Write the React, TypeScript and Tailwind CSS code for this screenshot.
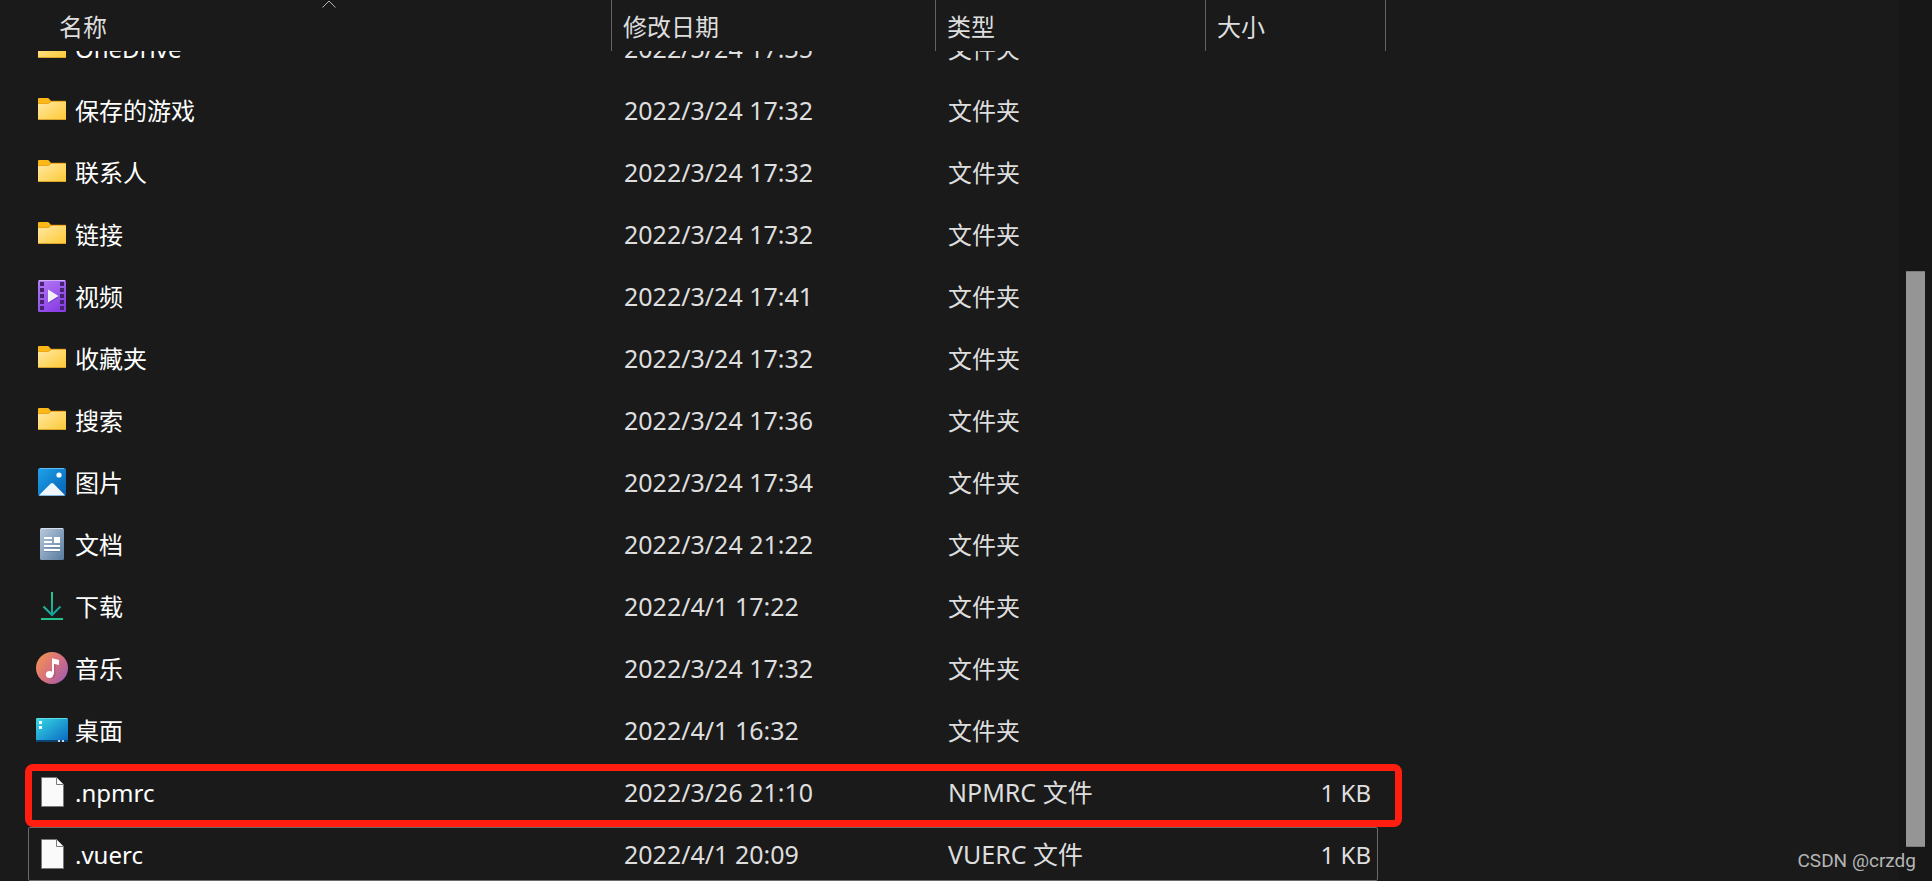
import React from 'react';
import clsx from 'clsx';

type Kind = 'folder' | 'video' | 'picture' | 'document' | 'download' | 'music' | 'desktop' | 'file';

interface Entry {
    name: string;
    kind: Kind;
    date: string;
    type: string;
    size?: string;
    marked?: boolean;
    focused?: boolean;
}

const entries: Entry[] = [
    { name: 'OneDrive', kind: 'folder', date: '2022/3/24 17:35', type: '文件夹' },
    { name: '保存的游戏', kind: 'folder', date: '2022/3/24 17:32', type: '文件夹' },
    { name: '联系人', kind: 'folder', date: '2022/3/24 17:32', type: '文件夹' },
    { name: '链接', kind: 'folder', date: '2022/3/24 17:32', type: '文件夹' },
    { name: '视频', kind: 'video', date: '2022/3/24 17:41', type: '文件夹' },
    { name: '收藏夹', kind: 'folder', date: '2022/3/24 17:32', type: '文件夹' },
    { name: '搜索', kind: 'folder', date: '2022/3/24 17:36', type: '文件夹' },
    { name: '图片', kind: 'picture', date: '2022/3/24 17:34', type: '文件夹' },
    { name: '文档', kind: 'document', date: '2022/3/24 21:22', type: '文件夹' },
    { name: '下载', kind: 'download', date: '2022/4/1 17:22', type: '文件夹' },
    { name: '音乐', kind: 'music', date: '2022/3/24 17:32', type: '文件夹' },
    { name: '桌面', kind: 'desktop', date: '2022/4/1 16:32', type: '文件夹' },
    { name: '.npmrc', kind: 'file', date: '2022/3/26 21:10', type: 'NPMRC 文件', size: '1 KB', marked: true },
    { name: '.vuerc', kind: 'file', date: '2022/4/1 20:09', type: 'VUERC 文件', size: '1 KB', focused: true },
];

// shared gradients, referenced by id from the icons
function Gradients() {
    return (
        <svg className="absolute size-0" aria-hidden="true">
            <defs>
                <linearGradient id="g-folder" x1="0" y1="0" x2="1" y2="1">
                    <stop offset="0" stopColor="#ffe9a6" />
                    <stop offset="1" stopColor="#ffc934" />
                </linearGradient>
                <linearGradient id="g-video" x1="0" y1="0" x2="0.6" y2="1">
                    <stop offset="0" stopColor="#b57bf5" />
                    <stop offset="1" stopColor="#8a3fe6" />
                </linearGradient>
                <linearGradient id="g-picture" x1="0" y1="0" x2="1" y2="1">
                    <stop offset="0" stopColor="#1ea3ea" />
                    <stop offset="1" stopColor="#0560b6" />
                </linearGradient>
                <linearGradient id="g-document" x1="0" y1="0" x2="1" y2="1">
                    <stop offset="0" stopColor="#b9c9de" />
                    <stop offset="1" stopColor="#587b9f" />
                </linearGradient>
                <linearGradient id="g-download" gradientUnits="userSpaceOnUse" x1="5" y1="2" x2="27" y2="30">
                    <stop offset="0" stopColor="#3bd08a" />
                    <stop offset="0.7" stopColor="#12a39b" />
                    <stop offset="1" stopColor="#1fbd9b" />
                </linearGradient>
                <linearGradient id="g-music" x1="0" y1="0.2" x2="1" y2="0.9">
                    <stop offset="0" stopColor="#f29154" />
                    <stop offset="0.5" stopColor="#d6707f" />
                    <stop offset="1" stopColor="#9a5bb4" />
                </linearGradient>
                <linearGradient id="g-desktop" x1="0" y1="0" x2="1" y2="1">
                    <stop offset="0" stopColor="#36dbe3" />
                    <stop offset="1" stopColor="#0a66c2" />
                </linearGradient>
            </defs>
        </svg>
    );
}

const drawings: Record<Kind, React.ReactNode> = {
    folder: (
        <>
            <path d="M2 5a1 1 0 0 1 1-1h8.5c.8 0 1.3.3 1.8.9L15 7v4H2z" fill="#fcb816" />
            <path d="M2 10h9.500c.8 0 1.300-.2 1.800-.7L15 7.500c.3-.3.7-.5 1.200-.5H29a1 1 0 0 1 1 1v17a1 1 0 0 1-1 1H3a1 1 0 0 1-1-1z" fill="url(#g-folder)" />
            <path d="M2 9.500h9.500c.8 0 1.300-.2 1.800-.7L15 7.300h14.500" stroke="#eda51a" fill="none" />
            <path d="M2 25.500h28" stroke="#d9a32c" />
        </>
    ),
    video: (
        <>
            <rect x="2" width="28" height="32" rx="1.500" fill="url(#g-video)" />
            <path d="M3 .5h26" stroke="#d2adfa" />
            <g fill="#43266f">
                {[2, 8, 14, 20, 26].map((y) => (
                    <React.Fragment key={y}>
                        <rect x="4" y={y} width="4" height="4" />
                        <rect x="24" y={y} width="4" height="4" />
                    </React.Fragment>
                ))}
            </g>
            <path d="M12.500 11.500v12l10-6z" fill="#5d2aa5" opacity=".5" />
            <path d="M12 9.500v13L22.500 16z" fill="#f1eff5" />
        </>
    ),
    picture: (
        <>
            <rect x="2" y="2" width="28" height="28" rx="2" fill="url(#g-picture)" />
            <path d="M4 2.500h24" stroke="#62bdf0" />
            <circle cx="23" cy="9" r="2.600" fill="#fff" />
            <path d="M3 29.200 14.800 17.600a1.900 1.900 0 0 1 2.600 0L29 29.200c-.4.300-.7.300-1.200.300H4.200c-.5 0-.8 0-1.200-.300z" fill="#eff5fc" />
        </>
    ),
    document: (
        <>
            <rect x="4" width="24" height="32" rx="1.500" fill="url(#g-document)" />
            <path d="M5 .5h22" stroke="#d3dfec" />
            <path d="M8 9h8v2H8zM8 13h8v2H8zM18 9h6v6h-6zM8 17h16v2H8zM8 21h16v2H8z" fill="#fff" />
            <path d="M8 23h16v1H8zM8 19h16v1H8z" fill="#516f92" opacity=".4" />
        </>
    ),
    download: (
        <>
            <path d="M16 2v23M7.500 16.500 16 25l8.500-8.500" stroke="url(#g-download)" strokeWidth="2" fill="none" />
            <rect x="5" y="28" width="22" height="2" fill="#23c28f" />
        </>
    ),
    music: (
        <>
            <circle cx="16" cy="16" r="16" fill="url(#g-music)" />
            <path d="M17.800 7.200v15.500a4 4 0 0 1-4.500 3.700c3 1 6.200-.4 6.200-3.400v-9z" fill="#8c4568" opacity=".4" />
            <circle cx="13.500" cy="22.500" r="3.600" fill="#fff" />
            <path d="M16 22.500V7.200c0-.7.500-1 1.100-.8L23 8v5l-5-1.300v10.800z" fill="#fff" />
        </>
    ),
    desktop: (
        <>
            <rect y="4" width="32" height="24" rx="1" fill="url(#g-desktop)" />
            <path d="M0 26h32v1a1 1 0 0 1-1 1H1a1 1 0 0 1-1-1z" fill="#0c4371" />
            <path d="M1 4.500h30" stroke="#5fdde4" />
            <path d="M3 7h3v3H3zM3 12h3v3H3z" fill="#fff" />
            <path d="M22 26h2v2h-2zM26 26h2v2h-2z" fill="#c9d8e6" />
        </>
    ),
    file: (
        <>
            <path d="M5.500 1.500h15l7 7v22h-22z" fill="#fafafa" stroke="#77787a" />
            <path d="M20.500 1.500v7h7" fill="#fafafa" stroke="#77787a" />
        </>
    ),
};

function FileIcon({ kind }: { kind: Kind }) {
    return (
        <svg viewBox="0 0 32 32" className="size-8 shrink-0" aria-hidden="true">
            {drawings[kind]}
        </svg>
    );
}

function Row({ entry }: { entry: Entry }) {
    return (
        <tr
            className={clsx(
                'relative mx-7 my-1 grid h-[54px] w-[1350px] grid-cols-[584px_324px_270px_1fr] items-center border text-2xl',
                entry.focused ? 'rounded-xs border-[#6b6b6b]' : 'border-transparent',
            )}
        >
            <td className="flex items-center gap-[7px] pl-[7px] text-white">
                <FileIcon kind={entry.kind} />
                <span className="pt-0.5">{entry.name}</span>
            </td>
            <td className="pt-0.5 pl-[11px] text-[25px]">{entry.date}</td>
            {/* types with Latin letters are set one pixel larger */}
            <td className={clsx('pt-0.5 pl-[11px]', entry.type !== '文件夹' && 'text-[25px]')}>{entry.type}</td>
            <td className="pt-0.5 pr-1.5 text-right">
                {entry.size}
                {entry.marked && (
                    <span className="absolute -top-0.5 -right-[25px] -bottom-[9px] -left-1 rounded-lg border-[7px] border-[#ff1e10]" />
                )}
            </td>
        </tr>
    );
}

export default function App() {
    return (
        <div
            lang="zh-CN"
            className="relative flex h-screen overflow-hidden bg-[#1a1a1a] font-['Noto_Sans','Noto_Sans_CJK_SC',sans-serif] text-[#dedede]"
        >
            <Gradients />
            <main className="min-w-0 flex-1 overflow-hidden">
                <table className="block">
                    <thead className="relative z-10 block bg-[#1a1a1a]">
                        <tr className="grid h-[51px] w-[1386px] grid-cols-[612px_324px_270px_180px] text-left text-2xl">
                            <th className="relative border-r border-[#636363] font-normal">
                                <button type="button" className="h-full w-full pt-0.5 pl-[59px] text-left">
                                    名称
                                </button>
                                <svg viewBox="0 0 14 8" className="absolute top-0 left-[322px] h-2 w-3.5" aria-hidden="true">
                                    <path d="M.5 7.500 7 1l6.500 6.500" stroke="#b4b4b4" fill="none" />
                                </svg>
                            </th>
                            {['修改日期', '类型', '大小'].map((title) => (
                                <th key={title} className="border-r border-[#636363] font-normal">
                                    <button type="button" className="h-full w-full pt-0.5 pl-[11px] text-left">
                                        {title}
                                    </button>
                                </th>
                            ))}
                        </tr>
                    </thead>
                    {/* list is scrolled, the first row slides under the header */}
                    <tbody className="-mt-[34px] flex flex-col">
                        {entries.map((entry) => (
                            <Row key={entry.name} entry={entry} />
                        ))}
                    </tbody>
                </table>
            </main>
            <aside className="flex w-[34px] flex-col bg-[#171717] pt-[271px] pr-[7px] pb-[34px] pl-2">
                <div className="flex-1 border-y border-[#7b7b7b] bg-[#959595]" />
            </aside>
            <p className="absolute right-4 bottom-2 font-['Roboto',sans-serif] text-[19px] leading-6 text-[#b5b5b5]">CSDN @crzdg</p>
        </div>
    );
}
